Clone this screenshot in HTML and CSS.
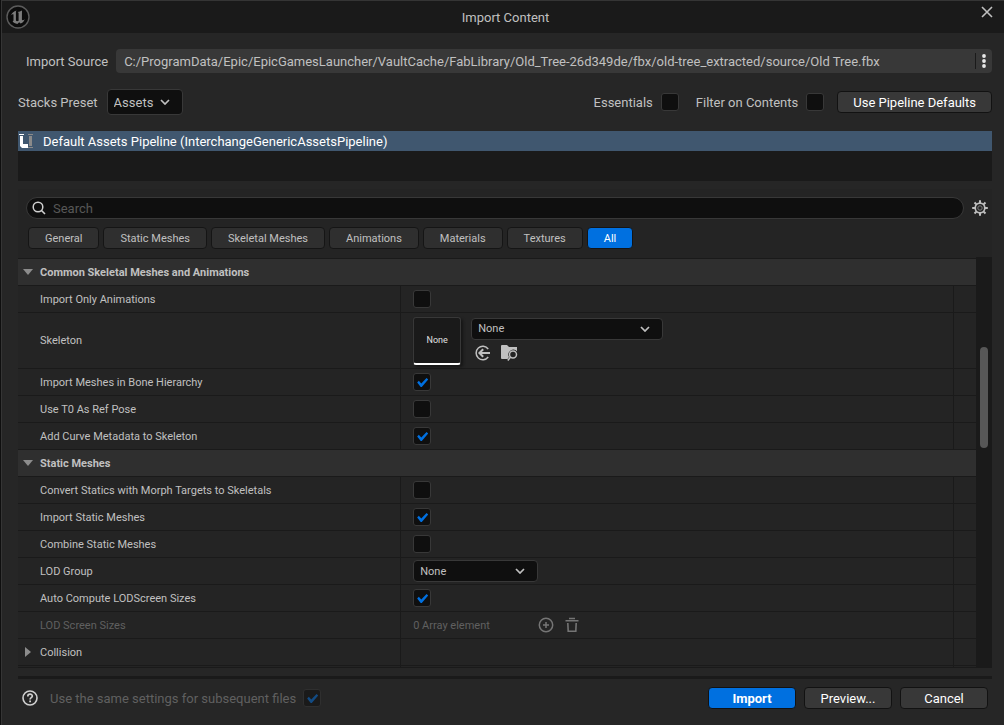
FILE: index.html
```html
<!DOCTYPE html>
<html lang="en">
<head>
    <meta charset="UTF-8">
    <meta name="viewport" content="width=device-width, initial-scale=1.0">
    <title>Import Content</title>
    <link rel="stylesheet" href="styles.css">
</head>
<body>
    <div class="window">
        <header class="titlebar">
            <svg class="logo" viewBox="0 0 24 24" width="24" height="24">
                <circle cx="12" cy="12" r="11" fill="#0c0c0c" stroke="#5c5c5c" stroke-width="1.4"/>
                <path d="M4.6 10.6C5.6 8.2 7.8 6.3 10.6 5.5L9.9 6.6V15.2C10.1 16.2 11.4 16.5 12.6 15.7V7.8L11.6 7C13.2 6.8 14.6 6.2 16 5.4L15.9 14.6C16.1 15.5 17.2 15.7 18.7 14.2C17.7 16.7 16.2 18 14.6 18.5L13.2 17.2L11.4 19C9.2 18.8 7.3 17.8 6.6 16.6L7.5 15.6V9.5C6.5 9 5.6 9.5 4.6 10.6Z" fill="#7c7c7c"/>
            </svg>
            <h1 class="title">Import Content</h1>
            <button class="icon-btn close" aria-label="Close">
                <svg viewBox="0 0 12 12" width="12" height="12"><path d="M1 1L11 11M11 1L1 11" fill="none" stroke="#c0c0c0" stroke-width="1.6"/></svg>
            </button>
        </header>

        <main class="content">
            <div class="source-row">
                <label for="source">Import Source</label>
                <div class="source-field">
                    <input type="text" id="source" value="C:/ProgramData/Epic/EpicGamesLauncher/VaultCache/FabLibrary/Old_Tree-26d349de/fbx/old-tree_extracted/source/Old Tree.fbx" readonly>
                    <button class="icon-btn more" aria-label="Browse">
                        <svg viewBox="0 0 4 14" width="4" height="14" fill="#e8e8e8"><circle cx="2" cy="2" r="1.9"/><circle cx="2" cy="7" r="1.9"/><circle cx="2" cy="12" r="1.9"/></svg>
                    </button>
                </div>
            </div>

            <div class="preset-row">
                <label for="preset">Stacks Preset</label>
                <div class="select preset-select">
                    <select id="preset"><option>Assets</option></select>
                    <svg class="chevron" viewBox="0 0 10 6" width="10" height="6"><path d="M1 1L5 5L9 1"/></svg>
                </div>
                <div class="preset-options">
                    <label for="essentials">Essentials</label>
                    <input type="checkbox" id="essentials">
                    <label for="filter">Filter on Contents</label>
                    <input type="checkbox" id="filter">
                    <button class="btn defaults">Use Pipeline Defaults</button>
                </div>
            </div>

            <ul class="pipelines">
                <li class="pipeline selected">
                    <svg viewBox="0 0 16 16" width="16" height="16">
                        <path d="M2 3H5V11H10V15H4L2 13Z" fill="#fff"/>
                        <path d="M1 1.5H6" stroke="#fff"/>
                        <path d="M10 1.5H15M10 14.5H15" stroke="#8a8a8a"/>
                        <path d="M11 3H14V13H11Z" fill="#8a8a8a"/>
                    </svg>
                    <span>Default Assets Pipeline (InterchangeGenericAssetsPipeline)</span>
                </li>
            </ul>

            <section class="details">
                <div class="search-row">
                    <div class="search">
                        <svg viewBox="0 0 14 14" width="14" height="14"><circle cx="6" cy="6" r="4.8" fill="none" stroke="#d0d0d0" stroke-width="1.5"/><path d="M9.5 9.5L13 13" stroke="#d0d0d0" stroke-width="1.6"/></svg>
                        <input type="text" placeholder="Search" aria-label="Search">
                    </div>
                    <button class="icon-btn" aria-label="Settings">
                        <svg viewBox="0 0 16 16" width="16" height="16" fill="none" stroke="#c0c0c0">
                            <circle cx="8" cy="8" r="4.8" stroke-width="1.7"/>
                            <circle cx="8" cy="8" r="2.2" stroke="#808080"/>
                            <path d="M8 .2V3M8 13V15.8M.2 8H3M13 8H15.8M2.5 2.5L4.4 4.4M11.6 11.6L13.5 13.5M2.5 13.5L4.4 11.6M11.6 4.4L13.5 2.5" stroke-width="2"/>
                        </svg>
                    </button>
                </div>

                <div class="filters">
                    <button class="chip">General</button>
                    <button class="chip">Static Meshes</button>
                    <button class="chip">Skeletal Meshes</button>
                    <button class="chip">Animations</button>
                    <button class="chip">Materials</button>
                    <button class="chip">Textures</button>
                    <button class="chip active">All</button>
                </div>

                <div class="scroll-area">
                    <div class="props">
                        <h2 class="group"><span class="arrow open"></span>Common Skeletal Meshes and Animations</h2>
                        <div class="prop">
                            <label class="name" for="only-anim">Import Only Animations</label>
                            <div class="value"><input type="checkbox" id="only-anim"></div>
                            <div class="reset"></div>
                        </div>
                        <div class="prop tall">
                            <label class="name" for="skeleton">Skeleton</label>
                            <div class="value">
                                <div class="thumb">None</div>
                                <div class="asset">
                                    <div class="select asset-select">
                                        <select id="skeleton"><option>None</option></select>
                                        <svg class="chevron" viewBox="0 0 10 6" width="10" height="6"><path d="M1 1L5 5L9 1"/></svg>
                                    </div>
                                    <div class="asset-tools">
                                        <button class="icon-btn" aria-label="Use selected asset">
                                            <svg viewBox="0 0 16 16" width="16" height="16" fill="none" stroke="#c0c0c0">
                                                <path d="M13.2 4A6.7 6.7 0 1 0 13.2 12" stroke-width="1.5"/>
                                                <path d="M15 8H5" stroke-width="2"/>
                                                <path d="M8.2 4.2L4.4 8L8.2 11.8" stroke-width="2"/>
                                            </svg>
                                        </button>
                                        <button class="icon-btn" aria-label="Browse to asset">
                                            <svg viewBox="0 0 17 16" width="17" height="16">
                                                <path d="M1 0H6L8 2H16V6.2A5 5 0 0 0 8 12L6.5 14H1Q0 14 0 13V1Q0 0 1 0Z" fill="#c0c0c0"/>
                                                <circle cx="12" cy="9.5" r="4.4" fill="#242424"/>
                                                <circle cx="12" cy="9.5" r="3.5" fill="none" stroke="#c0c0c0" stroke-width="1.5"/>
                                                <path d="M9.6 12L6.8 15.4" stroke="#c0c0c0" stroke-width="1.6"/>
                                            </svg>
                                        </button>
                                    </div>
                                </div>
                            </div>
                            <div class="reset"></div>
                        </div>
                        <div class="prop">
                            <label class="name" for="bone">Import Meshes in Bone Hierarchy</label>
                            <div class="value"><input type="checkbox" id="bone" checked></div>
                            <div class="reset"></div>
                        </div>
                        <div class="prop">
                            <label class="name" for="t0">Use T0 As Ref Pose</label>
                            <div class="value"><input type="checkbox" id="t0"></div>
                            <div class="reset"></div>
                        </div>
                        <div class="prop">
                            <label class="name" for="curve">Add Curve Metadata to Skeleton</label>
                            <div class="value"><input type="checkbox" id="curve" checked></div>
                            <div class="reset"></div>
                        </div>

                        <h2 class="group"><span class="arrow open"></span>Static Meshes</h2>
                        <div class="prop">
                            <label class="name" for="morph">Convert Statics with Morph Targets to Skeletals</label>
                            <div class="value"><input type="checkbox" id="morph"></div>
                            <div class="reset"></div>
                        </div>
                        <div class="prop">
                            <label class="name" for="import-static">Import Static Meshes</label>
                            <div class="value"><input type="checkbox" id="import-static" checked></div>
                            <div class="reset"></div>
                        </div>
                        <div class="prop">
                            <label class="name" for="combine">Combine Static Meshes</label>
                            <div class="value"><input type="checkbox" id="combine"></div>
                            <div class="reset"></div>
                        </div>
                        <div class="prop">
                            <label class="name" for="lod-group">LOD Group</label>
                            <div class="value">
                                <div class="select lod-select">
                                    <select id="lod-group"><option>None</option></select>
                                    <svg class="chevron" viewBox="0 0 10 6" width="10" height="6"><path d="M1 1L5 5L9 1"/></svg>
                                </div>
                            </div>
                            <div class="reset"></div>
                        </div>
                        <div class="prop">
                            <label class="name" for="auto-lod">Auto Compute LODScreen Sizes</label>
                            <div class="value"><input type="checkbox" id="auto-lod" checked></div>
                            <div class="reset"></div>
                        </div>
                        <div class="prop disabled">
                            <span class="name">LOD Screen Sizes</span>
                            <div class="value">
                                <span class="array-count">0 Array element</span>
                                <button class="icon-btn" aria-label="Add element" disabled>
                                    <svg viewBox="0 0 16 16" width="16" height="16" fill="none" stroke="#757575" stroke-width="1.5"><circle cx="8" cy="8" r="6.7"/><path d="M8 5V11M5 8H11"/></svg>
                                </button>
                                <button class="icon-btn" aria-label="Remove all elements" disabled>
                                    <svg viewBox="0 0 16 16" width="16" height="16" fill="none" stroke="#757575" stroke-width="1.6"><path d="M1.5 3.8H14.5M5 1.5H11M3.8 6L4.2 14.2H11.8L12.2 6"/></svg>
                                </button>
                            </div>
                            <div class="reset"></div>
                        </div>
                        <div class="prop">
                            <span class="name"><span class="arrow"></span>Collision</span>
                            <div class="value"></div>
                            <div class="reset"></div>
                        </div>
                        <div class="prop">
                            <span class="name"></span>
                            <div class="value"></div>
                            <div class="reset"></div>
                        </div>
                    </div>
                    <div class="scrollbar"><div class="scroll-thumb"></div></div>
                </div>
            </section>

            <footer class="footer">
                <svg viewBox="0 0 16 16" width="16" height="16" fill="none" stroke="#d0d0d0"><circle cx="8" cy="8" r="7" stroke-width="1.6"/><path d="M5.8 6.4C5.8 3.4 10.3 3.5 10.3 6.1C10.3 7.7 8.1 7.6 8.1 9.4" stroke-width="1.7"/><path d="M8.1 10.6V12.3" stroke-width="1.8"/></svg>
                <label class="same-label" for="same">Use the same settings for subsequent files</label>
                <input type="checkbox" id="same" checked disabled>
                <div class="actions">
                    <button class="btn primary">Import</button>
                    <button class="btn">Preview...</button>
                    <button class="btn">Cancel</button>
                </div>
            </footer>
        </main>
    </div>
</body>
</html>
```
FILE: styles.css
```css
* {
    margin: 0;
    padding: 0;
    box-sizing: border-box;
}

body {
    padding-left: 1px;
    background: #0f0f0f;
    color: #c0c0c0;
    font-family: Roboto, "Liberation Sans", sans-serif;
    font-size: 13px;
    line-height: 17px;
}

button, input, select {
    font: inherit;
    color: inherit;
}

svg {
    display: block;
    flex: none;
}

.window {
    display: flex;
    flex-direction: column;
    height: 100vh;
    border-top: 1px solid #353535;
    border-left: 1px solid #353535;
    background: #262626;
}

/* title bar */
.titlebar {
    display: flex;
    height: 32px;
    padding: 4px 11px 0 4px;
    background: #1a1a1a;
}

.title {
    flex: 1;
    font-size: 13px;
    font-weight: 400;
    line-height: 26px;
    text-align: center;
}

.icon-btn {
    display: flex;
    align-items: center;
    justify-content: center;
    border: none;
    background: none;
}

.close {
    width: 12px;
    height: 14px;
}

.content {
    flex: 1;
    min-height: 0;
    display: flex;
    flex-direction: column;
    padding: 16px 12px 0 16px;
}

/* source and preset */
.source-row {
    display: flex;
    align-items: center;
    gap: 8px;
    padding-left: 8px;
}

.source-field {
    flex: 1;
    display: flex;
    align-items: center;
    height: 24px;
    border-radius: 4px;
    background: #383838;
}

.source-field input {
    flex: 1;
    min-width: 0;
    padding-left: 8px;
    border: none;
    outline: none;
    background: none;
}

.more {
    width: 17px;
    height: 16px;
    border-left: 1px solid #1a1a1a;
}

.preset-row {
    display: flex;
    align-items: center;
    gap: 9px;
    margin-top: 16px;
}

.preset-options {
    display: flex;
    align-items: center;
    gap: 8px;
    margin-left: auto;
}

.preset-options #essentials {
    margin-right: 9px;
}

.preset-options #filter {
    margin-right: 5px;
}

.select {
    position: relative;
}

.select select {
    display: block;
    width: 100%;
    height: 22px;
    padding-left: 6px;
    border: 1px solid #383838;
    border-radius: 4px;
    outline: none;
    background: #0f0f0f;
    appearance: none;
}

.chevron {
    position: absolute;
    top: 50%;
    right: 13px;
    margin-top: -3px;
    fill: none;
    stroke: #c0c0c0;
    stroke-width: 1.7;
    pointer-events: none;
}

.preset-select {
    width: 76px;
}

.preset-select select {
    height: 26px;
}

input[type="checkbox"] {
    position: relative;
    flex: none;
    width: 18px;
    height: 18px;
    border: 1px solid #383838;
    border-radius: 3px;
    background: #0f0f0f;
    appearance: none;
}

input[type="checkbox"]:checked::after {
    content: "";
    position: absolute;
    top: 4px;
    left: 3px;
    width: 11px;
    height: 9px;
    background: #0070e0;
    clip-path: polygon(0 50%, 15% 30%, 37% 60%, 85% 0, 100% 16%, 42% 100%, 32% 100%);
}

.btn {
    min-width: 88px;
    height: 22px;
    padding: 0 15px;
    border: 1px solid #121212;
    border-radius: 4px;
    background: #383838;
    color: #fff;
}

.primary {
    background: #0070e0;
    font-weight: 700;
}

/* pipeline list */
.pipelines {
    height: 50px;
    margin-top: 16px;
    background: #1a1a1a;
    list-style: none;
}

.pipeline {
    display: flex;
    align-items: center;
    gap: 9px;
    height: 20px;
}

.pipeline.selected {
    background: #40576f;
    color: #fff;
}

/* details panel */
.details {
    flex: 1;
    min-height: 0;
    display: flex;
    flex-direction: column;
    margin-top: 8px;
    background: #242424;
}

.search-row {
    display: flex;
    align-items: center;
    gap: 8px;
    padding: 8px 4px 8px 8px;
}

.search {
    flex: 1;
    display: flex;
    align-items: center;
    gap: 7px;
    height: 22px;
    padding: 0 5px;
    border: 1px solid #383838;
    border-radius: 11px;
    background: #0f0f0f;
}

.search input {
    flex: 1;
    border: none;
    outline: none;
    background: none;
}

.search input::placeholder {
    color: #575757;
}

.filters {
    display: flex;
    gap: 4px;
    padding: 0 10px 8px;
    font-size: 11px;
}

.chip {
    height: 22px;
    padding: 0 16px;
    border: 1px solid #151515;
    border-radius: 4px;
    background: #2f2f2f;
    white-space: nowrap;
}

.chip.active {
    background: #0070e0;
    color: #fff;
}

.scroll-area {
    flex: 1;
    min-height: 0;
    display: flex;
    overflow: hidden;
    border-bottom: 1px solid #1a1a1a;
}

.props {
    flex: 1;
    overflow: hidden;
    margin-top: 1px;
    border-top: 1px solid #1a1a1a;
    font-size: 11px;
}

.group {
    display: flex;
    align-items: center;
    height: 27px;
    padding-left: 22px;
    border-bottom: 1px solid #1a1a1a;
    background: #2f2f2f;
    font-size: 11px;
    font-weight: 700;
}

.arrow {
    width: 6px;
    height: 10px;
    margin: 0 9px 0 -15px;
    background: #8c8c8c;
    clip-path: polygon(0 0, 100% 50%, 0 100%);
}

.arrow.open {
    width: 10px;
    height: 6px;
    margin: 0 7px 0 -17px;
    clip-path: polygon(0 0, 100% 0, 50% 100%);
}

.prop {
    display: grid;
    grid-template-columns: 40% 1fr 23px;
    height: 27px;
    border-bottom: 1px solid #1a1a1a;
}

.prop.tall {
    height: 56px;
}

.name {
    display: flex;
    align-items: center;
    padding-left: 22px;
    border-right: 1px solid #1a1a1a;
}

.value {
    display: flex;
    align-items: center;
    gap: 10px;
    padding-left: 12px;
}

.reset {
    border-left: 1px solid #1a1a1a;
}

.disabled {
    color: #606060;
}

.array-count {
    width: 115px;
}

.thumb {
    display: flex;
    align-items: center;
    justify-content: center;
    width: 48px;
    height: 48px;
    border: 1px solid #383838;
    border-bottom: 2px solid #fff;
    border-radius: 3px;
    background: #1a1a1a;
    box-shadow: 2px 2px 3px #151515;
    color: #e0e0e0;
    font-size: 9px;
}

.asset {
    width: 192px;
}

.asset-tools {
    display: flex;
    gap: 10px;
    padding: 5px 4px 3px;
}

.lod-select {
    width: 125px;
}

.scrollbar {
    width: 16px;
    padding: 90px 4px 0;
    background: #1a1a1a;
}

.scroll-thumb {
    height: 101px;
    border-radius: 4px;
    background: #575757;
}

/* footer */
.footer {
    display: flex;
    align-items: center;
    height: 49px;
    margin-top: 8px;
    padding: 0 4px 8px;
    border-top: 3px solid #1a1a1a;
}

.same-label {
    margin: 0 7px 0 12px;
    color: #606060;
}

.footer input {
    opacity: 0.5;
}

.actions {
    display: flex;
    gap: 8px;
    margin-left: auto;
}
```
